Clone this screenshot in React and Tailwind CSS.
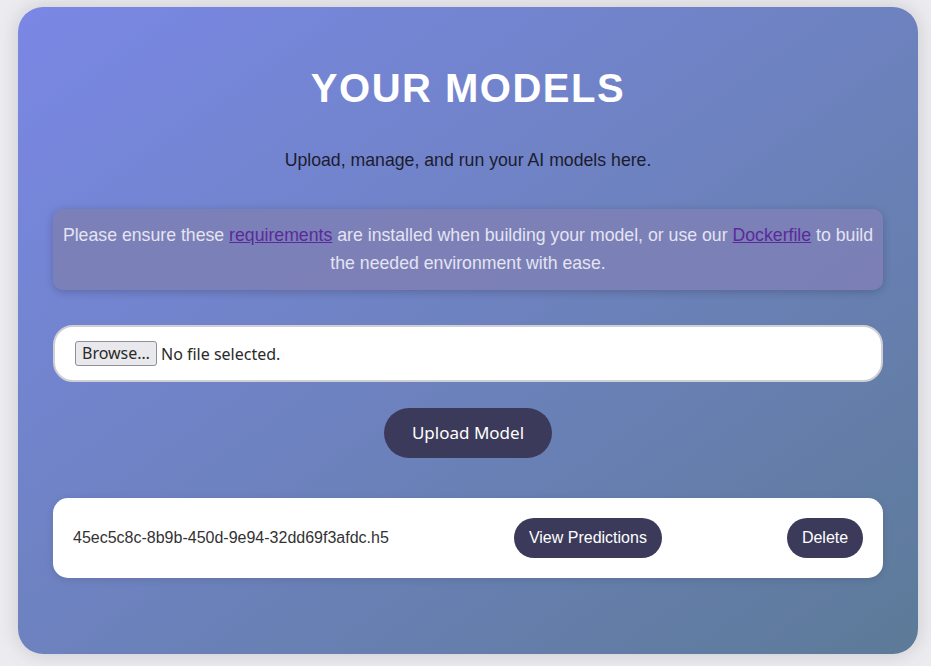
import React from "react";

function App() {
  const models = ["45ec5c8c-8b9b-450d-9e94-32dd69f3afdc.h5"];

  return (
    <div className="min-h-screen bg-[#ececf0] pl-[18px] pt-[7px] font-['Liberation_Sans',Arial,sans-serif]">
      <div className="h-[647px] w-[900px] rounded-[25px] bg-gradient-to-br from-[#7a87e5] via-[#6d82bf] to-[#5d7a98] px-[35px] pt-[53px] shadow-[0_0_20px_rgba(0,0,0,0.15)]">
        <h1 className="text-center text-[40px] leading-[56px] font-bold tracking-[1.5px] text-white">
          YOUR MODELS
        </h1>
        <p className="mt-[30px] text-center text-[17.7px] leading-[28px] text-[#1c1c30]">
          Upload, manage, and run your AI models here.
        </p>

        {/* Requirements notice */}
        <div className="mt-[35px] rounded-[10px] bg-[#7c7fb6]/95 px-[2px] pt-[12px] pb-[13px] text-center text-[17.7px] leading-[28px] text-[#e4e4f2] shadow-[0_2px_8px_rgba(0,0,0,0.2)]">
          Please ensure these{" "}
          <a href="#" className="text-[#5a2a9c] underline">requirements</a>{" "}
          are installed when building your model, or use our{" "}
          <a href="#" className="text-[#5a2a9c] underline">Dockerfile</a>{" "}
          to build the needed environment with ease.
        </div>

        {/* Upload */}
        <div className="mt-[35px] flex h-[57px] items-center rounded-[20px] border-2 border-[#cfcfd4] bg-white px-[20px] font-['Noto_Sans',sans-serif] text-[16px] text-[#2a2a2a]">
          <span className="rounded-[3px] border border-[#8f8f9d] bg-[#e9e9ed] px-[6px] leading-[23px]">
            Browse…
          </span>
          <span className="ml-[4px]">No file selected.</span>
        </div>

        <div className="mt-[26px] flex justify-center">
          <button className="h-[50px] w-[168px] rounded-full bg-[#3c3a5a] font-['Noto_Sans',sans-serif] text-[17px] text-white">
            Upload Model
          </button>
        </div>

        {/* Model list */}
        {models.map((m) => (
          <div
            key={m}
            className="mt-[40px] flex h-[80px] items-center justify-between rounded-[15px] bg-white px-[20px] shadow-[0_2px_8px_rgba(0,0,0,0.1)]"
          >
            <span className="text-[16px] text-[#333]">{m}</span>
            <button className="h-[40px] w-[148px] rounded-full bg-[#3c3a5a] text-[16px] text-white">
              View Predictions
            </button>
            <button className="h-[40px] w-[76px] rounded-full bg-[#3c3a5a] text-[16px] text-white">
              Delete
            </button>
          </div>
        ))}
      </div>
    </div>
  );
}

export default App;
